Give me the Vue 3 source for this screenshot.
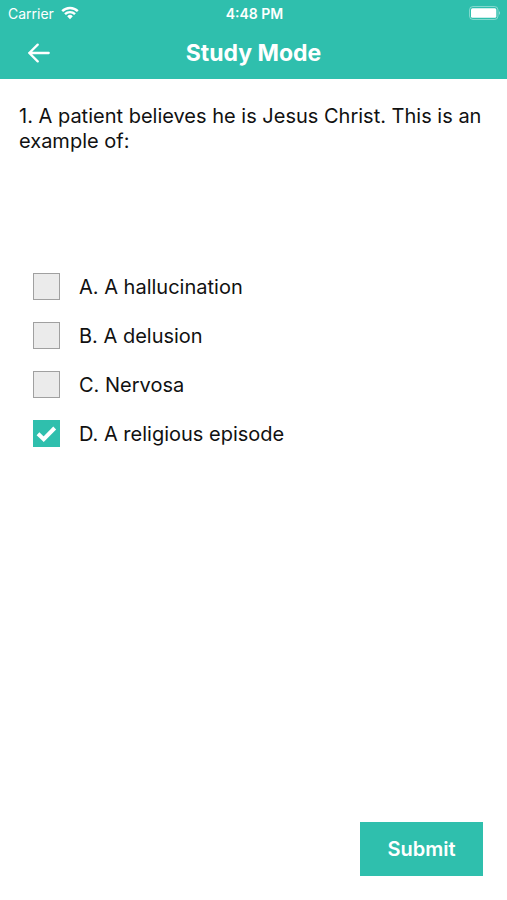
<script setup>
import { ref } from 'vue'

const options = [
  { id: 'a', label: 'A. A hallucination' },
  { id: 'b', label: 'B. A delusion' },
  { id: 'c', label: 'C. Nervosa' },
  { id: 'd', label: 'D. A religious episode' }
]
const selected = ref(['d'])
</script>

<template>
  <main class="screen">
    <header class="top">
      <div class="status">
        <div class="carrier">
          <span>Carrier</span>
          <svg class="wifi" width="18" height="14" viewBox="0 0 18 14" aria-hidden="true">
            <g fill="none" stroke="#fff" stroke-width="2.4">
              <path d="M1.2 5.2A11 11 0 0 1 16.8 5.2" />
              <path d="M4 8.2A7 7 0 0 1 14 8.2" />
            </g>
            <path d="M9 13.2L6.2 10.2A4 4 0 0 1 11.8 10.2Z" fill="#fff" />
          </svg>
        </div>
        <span class="time">4:48 PM</span>
        <svg class="battery" width="32" height="14" viewBox="0 0 32 14" aria-hidden="true">
          <rect x="0.5" y="0.5" width="28.5" height="13" rx="3.5" fill="none" stroke="#fff" stroke-opacity="0.4" />
          <rect x="2" y="2.3" width="25.3" height="9.4" rx="1.5" fill="#fff" />
          <path d="M30 5Q32 7 30 9Z" fill="#fff" fill-opacity="0.5" />
        </svg>
      </div>
      <div class="nav">
        <button class="back" type="button" aria-label="Back">
          <svg width="24" height="20" viewBox="0 0 24 20" aria-hidden="true">
            <path d="M21.7 10H2.2M10.7 1.6L2.3 10L10.7 18.4" fill="none" stroke="#fff" stroke-width="2.3" stroke-linecap="round" stroke-linejoin="round" />
          </svg>
        </button>
        <h1>Study Mode</h1>
      </div>
    </header>

    <form class="quiz" @submit.prevent>
      <p id="question" class="question">1. A patient believes he is Jesus Christ. This is an example of:</p>
      <div class="options" role="group" aria-labelledby="question">
        <label v-for="o in options" :key="o.id" class="option" :for="o.id">
          <span class="tick">
            <input :id="o.id" v-model="selected" type="checkbox" :value="o.id" />
            <svg class="mark" width="27" height="27" viewBox="0 0 27 27" aria-hidden="true">
              <path d="M5 13.8L10.7 19.2L21.7 8" fill="none" stroke="#fff" stroke-width="4" />
            </svg>
          </span>
          <span>{{ o.label }}</span>
        </label>
      </div>
      <button class="submit" type="submit">Submit</button>
    </form>
  </main>
</template>

<style>
body {
  background: #fff;
}
</style>

<style scoped>
.screen {
  display: flex;
  flex-direction: column;
  min-height: 100vh;
  font-family: Inter, "Liberation Sans", sans-serif;
  color: #111;
}
.top {
  background: #2fbfad;
  color: #fff;
}
.status {
  display: grid;
  grid-template-columns: 1fr auto 1fr;
  align-items: center;
  height: 26px;
  padding: 0 6px 0 8px;
  font-size: 14px;
}
.carrier {
  display: flex;
  align-items: center;
  gap: 7px;
}
.time {
  font-weight: 600;
}
.battery {
  justify-self: end;
}
.nav {
  display: grid;
  grid-template-columns: 48px 1fr 48px;
  align-items: center;
  height: 53px;
  padding: 0 15px;
}
.back {
  display: flex;
  align-items: center;
  justify-content: center;
  height: 48px;
  padding: 0;
  border: 0;
  background: none;
}
h1 {
  margin: 0;
  font-size: 23px;
  font-weight: 700;
  text-align: center;
}
.quiz {
  display: flex;
  flex: 1;
  flex-direction: column;
  padding: 25px 24px 24px 19px;
}
.question {
  min-height: 158px;
  margin: 0;
  font-size: 20px;
  line-height: 25px;
}
.options {
  display: flex;
  flex-direction: column;
  padding-left: 14px;
}
.option {
  display: flex;
  align-items: center;
  gap: 19px;
  height: 49px;
  font-size: 20px;
}
.tick {
  display: grid;
  width: 27px;
  height: 27px;
}
.tick > * {
  grid-area: 1 / 1;
  place-self: center;
}
input {
  box-sizing: border-box;
  width: 27px;
  height: 27px;
  margin: 0;
  border: 1px solid #a0a0a0;
  background: #ebebeb;
  appearance: none;
}
input:checked {
  border-color: #2fbfad;
  background: #2fbfad;
}
.mark {
  visibility: hidden;
  pointer-events: none;
}
input:checked + .mark {
  visibility: visible;
}
.submit {
  align-self: flex-end;
  width: 123px;
  height: 54px;
  margin-top: auto;
  border: 0;
  background: #2fbfad;
  color: #fff;
  font-family: inherit;
  font-size: 20px;
  font-weight: 600;
}
</style>
